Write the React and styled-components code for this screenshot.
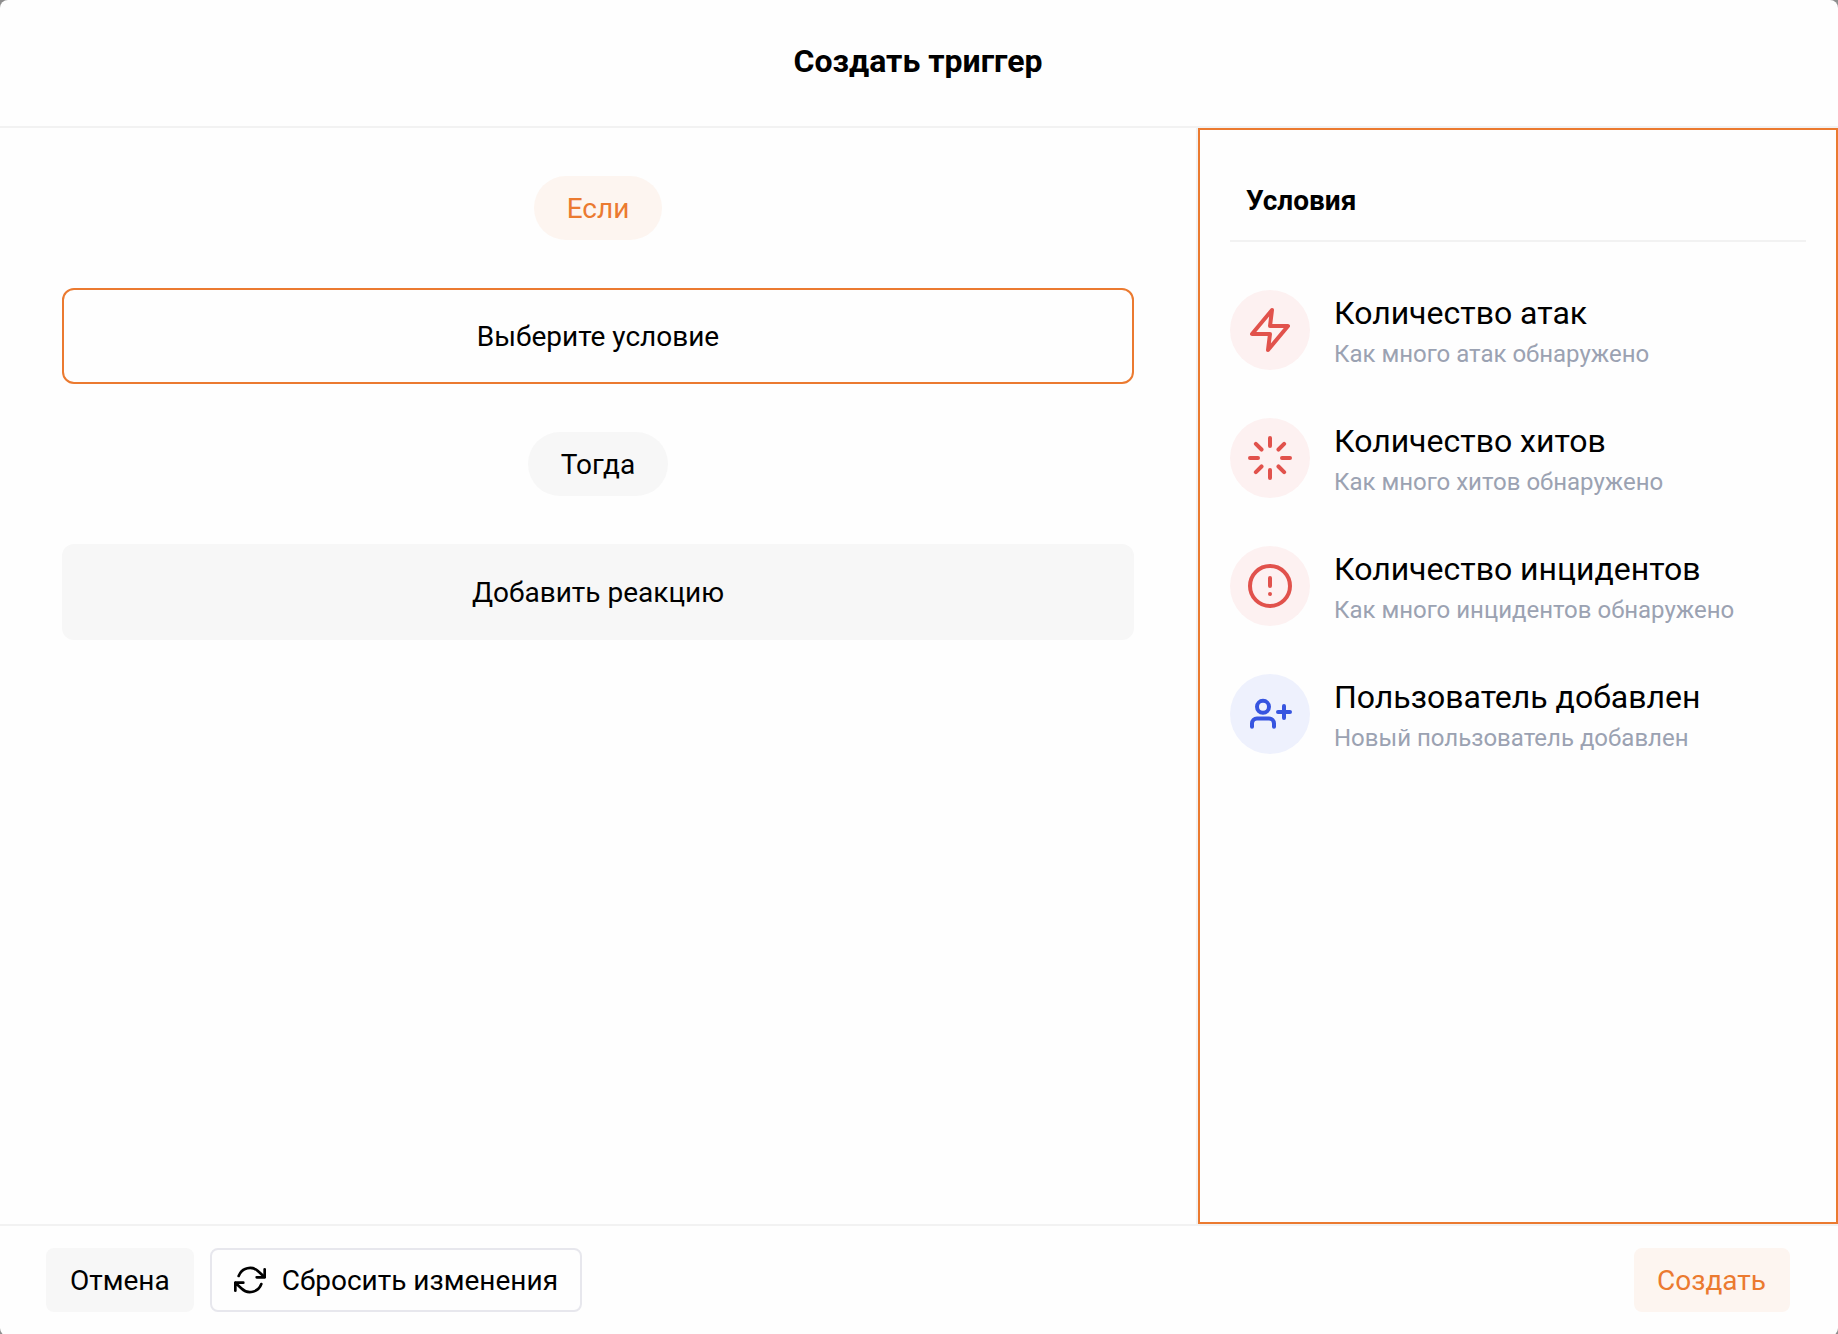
import React from "react";
import styled, { createGlobalStyle } from "styled-components";

const GlobalStyle = createGlobalStyle`
  *, *::before, *::after { box-sizing: border-box; }
  body {
    margin: 0;
    background: #8e8e8e;
    font-family: Roboto, "Liberation Sans", sans-serif;
    color: #000;
    overflow: hidden;
  }
`;

const Modal = styled.div`
  display: flex;
  flex-direction: column;
  height: 1336px;
  background: #fefefe;
  border-radius: 8px;
  overflow: hidden;
`;

const Header = styled.header`
  display: flex;
  align-items: center;
  justify-content: center;
  height: 128px;
  padding: 0 2px 4px 0;
  border-bottom: 2px solid #f2f2f2;
`;

const Title = styled.h1`
  margin: 0;
  font-size: 32px;
  line-height: 40px;
  font-weight: 700;
`;

const Body = styled.main`
  display: flex;
  height: 1096px;
`;

const Flow = styled.section`
  display: flex;
  flex-direction: column;
  align-items: center;
  gap: 48px;
  width: 1198px;
  padding: 48px 62px;
  border-right: 2px solid #f2f2f2;
`;

const Pill = styled.div`
  height: 64px;
  padding: 0 33px;
  border-radius: 32px;
  font-size: 28px;
  line-height: 66px;
  color: ${(p) => (p.$active ? "#eb7a30" : "#000")};
  background: ${(p) => (p.$active ? "#fdf5f0" : "#f7f7f7")};
`;

const Slot = styled.button`
  width: 100%;
  height: 96px;
  padding: 2px 0 0;
  border: 2px solid ${(p) => (p.$active ? "#eb7a30" : "#f7f7f7")};
  border-radius: 12px;
  background: ${(p) => (p.$active ? "#fefefe" : "#f7f7f7")};
  color: #000;
  font: 400 28px/40px Roboto, "Liberation Sans", sans-serif;
`;

const Sidebar = styled.aside`
  flex: 1;
  padding: 46px 30px;
  border: 2px solid #eb7a30;
`;

const SidebarTitle = styled.h2`
  margin: 0;
  height: 66px;
  padding: 5px 16px 0;
  border-bottom: 2px solid #f2f2f2;
  font-size: 28px;
  line-height: 40px;
  font-weight: 700;
`;

const Conditions = styled.ul`
  display: flex;
  flex-direction: column;
  gap: 48px;
  margin: 48px 0 0;
  padding: 0;
  list-style: none;
`;

const Condition = styled.li`
  display: flex;
  align-items: center;
  gap: 24px;
  height: 80px;
`;

const IconCircle = styled.span`
  display: flex;
  align-items: center;
  justify-content: center;
  flex: none;
  width: 80px;
  height: 80px;
  border-radius: 50%;
  color: ${(p) => (p.$tone === "blue" ? "#3755e0" : "#e1524c")};
  background: ${(p) => (p.$tone === "blue" ? "#eef1fd" : "#fdf1f1")};
`;

const ConditionText = styled.div`
  display: flex;
  flex-direction: column;
  white-space: nowrap;
`;

const ConditionName = styled.span`
  height: 48px;
  font-size: 32px;
  line-height: 46px;
`;

const ConditionHint = styled.span`
  font-size: 24px;
  line-height: 32px;
  color: #9ba2b2;
`;

const Footer = styled.footer`
  display: flex;
  align-items: flex-start;
  justify-content: space-between;
  flex: 1;
  padding: 22px 48px 0 46px;
  border-top: 2px solid #f2f2f2;
`;

const Actions = styled.div`
  display: flex;
  gap: 16px;
`;

const variants = {
  plain: "background: #f7f7f7; border-color: #f7f7f7; color: #000;",
  outline: "background: #fefefe; border-color: #e7e7ed; color: #000;",
  accent:
    "width: 156px; padding: 0 21px; background: #fdf5f0; border-color: #fdf5f0; color: #eb7a30;",
};

const Button = styled.button`
  display: flex;
  align-items: center;
  gap: 16px;
  height: 64px;
  padding: 0 22px;
  border: 2px solid;
  border-radius: 8px;
  font: 400 28px/40px Roboto, "Liberation Sans", sans-serif;
  white-space: nowrap;
  ${(p) => variants[p.$variant]}
`;

const Label = styled.span`
  padding-top: 2px;
`;

const Glyph = ({ size = 48, children }) => (
  <svg
    width={size}
    height={size}
    viewBox="0 0 24 24"
    fill="none"
    stroke="currentColor"
    strokeWidth="2"
    strokeLinecap="round"
    strokeLinejoin="round"
  >
    {children}
  </svg>
);

const icons = {
  zap: <path d="M13 2L3 14h9l-1 8 10-12h-9l1-8z" />,
  loader: (
    <path d="M12 2v4M12 18v4M4.93 4.93l2.83 2.83M16.24 16.24l2.83 2.83M2 12h4M18 12h4M4.93 19.07l2.83-2.83M16.24 7.76l2.83-2.83" />
  ),
  alert: (
    <>
      <circle cx="12" cy="12" r="10" />
      <path d="M12 8v4M12 16h.01" />
    </>
  ),
  userPlus: (
    <>
      <circle cx="8.5" cy="8.4" r="3" />
      <path d="M3 18.4v-1.7a2.5 2.5 0 0 1 2.5-2.5h6a2.5 2.5 0 0 1 2.5 2.5v1.7M19 8v6M22 11h-6" />
    </>
  ),
  refresh: (
    <path d="M23 4v6h-6M1 20v-6h6M3.51 9a9 9 0 0 1 14.85-3.36L23 10M1 14l4.64 4.36A9 9 0 0 0 20.49 15" />
  ),
};

const conditions = [
  { icon: "zap", tone: "red", name: "Количество атак", hint: "Как много атак обнаружено" },
  { icon: "loader", tone: "red", name: "Количество хитов", hint: "Как много хитов обнаружено" },
  { icon: "alert", tone: "red", name: "Количество инцидентов", hint: "Как много инцидентов обнаружено" },
  { icon: "userPlus", tone: "blue", name: "Пользователь добавлен", hint: "Новый пользователь добавлен" },
];

export default function App() {
  return (
    <>
      <GlobalStyle />
      <Modal>
        <Header>
          <Title>Создать триггер</Title>
        </Header>
        <Body>
          <Flow>
            <Pill $active>Если</Pill>
            <Slot $active>Выберите условие</Slot>
            <Pill>Тогда</Pill>
            <Slot>Добавить реакцию</Slot>
          </Flow>
          <Sidebar>
            <SidebarTitle>Условия</SidebarTitle>
            <Conditions>
              {conditions.map((c) => (
                <Condition key={c.icon}>
                  <IconCircle $tone={c.tone}>
                    <Glyph>{icons[c.icon]}</Glyph>
                  </IconCircle>
                  <ConditionText>
                    <ConditionName>{c.name}</ConditionName>
                    <ConditionHint>{c.hint}</ConditionHint>
                  </ConditionText>
                </Condition>
              ))}
            </Conditions>
          </Sidebar>
        </Body>
        <Footer>
          <Actions>
            <Button $variant="plain">
              <Label>Отмена</Label>
            </Button>
            <Button $variant="outline">
              <Glyph size={32}>{icons.refresh}</Glyph>
              <Label>Сбросить изменения</Label>
            </Button>
          </Actions>
          <Button $variant="accent">
            <Label>Создать</Label>
          </Button>
        </Footer>
      </Modal>
    </>
  );
}
